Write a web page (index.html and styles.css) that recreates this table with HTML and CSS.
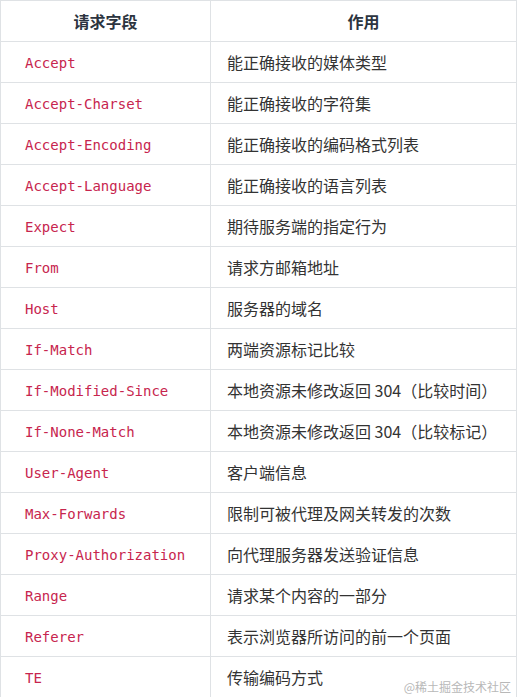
FILE: index.html
```html
<!DOCTYPE html>
<html lang="zh">
<head>
<meta charset="utf-8">
<link rel="stylesheet" href="styles.css">
</head>
<body>
<div class="wrap">
<table class="tbl">
  <thead>
    <tr><th class="c1">请求字段</th><th class="c2">作用</th></tr>
  </thead>
  <tbody>
    <tr><td><code>Accept</code></td><td>能正确接收的媒体类型</td></tr>
    <tr><td><code>Accept-Charset</code></td><td>能正确接收的字符集</td></tr>
    <tr><td><code>Accept-Encoding</code></td><td>能正确接收的编码格式列表</td></tr>
    <tr><td><code>Accept-Language</code></td><td>能正确接收的语言列表</td></tr>
    <tr><td><code>Expect</code></td><td>期待服务端的指定行为</td></tr>
    <tr><td><code>From</code></td><td>请求方邮箱地址</td></tr>
    <tr><td><code>Host</code></td><td>服务器的域名</td></tr>
    <tr><td><code>If-Match</code></td><td>两端资源标记比较</td></tr>
    <tr><td><code>If-Modified-Since</code></td><td>本地资源未修改返回 304（比较时间）</td></tr>
    <tr><td><code>If-None-Match</code></td><td>本地资源未修改返回 304（比较标记）</td></tr>
    <tr><td><code>User-Agent</code></td><td>客户端信息</td></tr>
    <tr><td><code>Max-Forwards</code></td><td>限制可被代理及网关转发的次数</td></tr>
    <tr><td><code>Proxy-Authorization</code></td><td>向代理服务器发送验证信息</td></tr>
    <tr><td><code>Range</code></td><td>请求某个内容的一部分</td></tr>
    <tr><td><code>Referer</code></td><td>表示浏览器所访问的前一个页面</td></tr>
    <tr><td><code>TE</code></td><td>传输编码方式</td></tr>
  </tbody>
</table>
<div class="mark">@稀土掘金技术社区</div>
</div>
</body>
</html>
```
FILE: styles.css
```css
html, body {
  margin: 0;
  padding: 0;
  background: #fff;
}
.wrap {
  position: relative;
  width: 517px;
  height: 697px;
  overflow: hidden;
}
.tbl {
  border-collapse: collapse;
  width: 517px;
  table-layout: fixed;
  font-family: "Noto Sans CJK SC", "Noto Sans", sans-serif;
  font-size: 16px;
  color: #333;
}
.tbl th, .tbl td {
  border: 1px solid #dfe2e5;
  height: 41px;
  padding: 0 16px;
  box-sizing: border-box;
  vertical-align: middle;
  line-height: 20px;
}
.tbl th {
  font-weight: 700;
  text-align: center;
  color: #2c3440;
}
.c1 { width: 210px; }
.tbl code {
  font-family: "DejaVu Sans Mono", monospace;
  font-size: 14px;
  color: #c7254e;
  padding: 0 8px;
}
.mark {
  position: absolute;
  right: 6px;
  bottom: 2px;
  font-family: "Noto Sans CJK SC", sans-serif;
  font-size: 12px;
  color: #b8b8b8;
  line-height: 16px;
}
```
